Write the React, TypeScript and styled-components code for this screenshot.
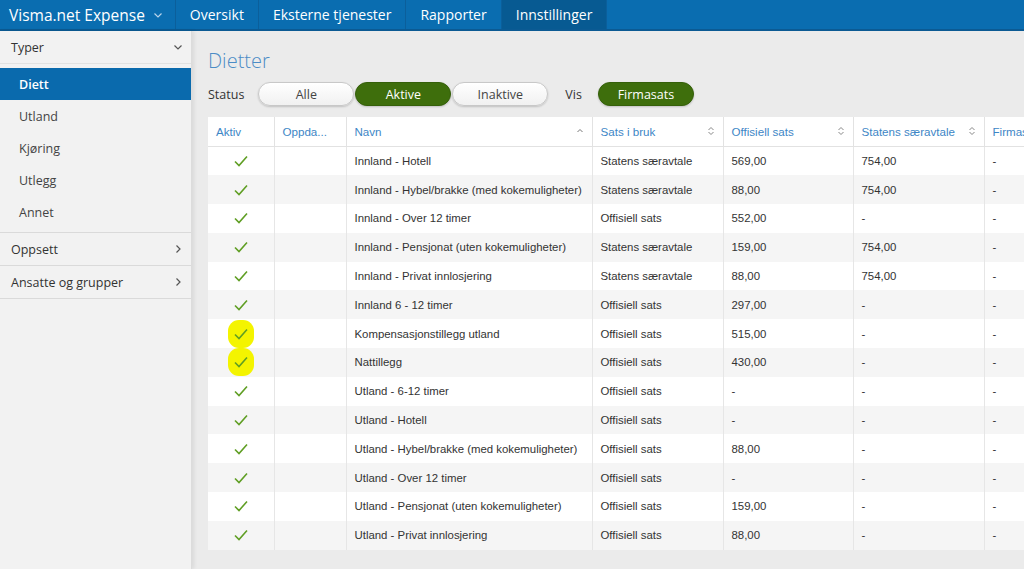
import React from "react";
import styled, { createGlobalStyle } from "styled-components";

const GlobalStyle = createGlobalStyle`
  html, body { margin: 0; padding: 0; height: 100%; overflow: hidden; }
  body { font-family: "Open Sans", "Liberation Sans", Arial, sans-serif; background: #ebebeb; }
  #root { height: 100%; }
`;

const Page = styled.div`
  width: 1024px;
  height: 569px;
  display: flex;
  flex-direction: column;
  overflow: hidden;
`;

const TopBar = styled.div`
  height: 29px;
  flex-shrink: 0;
  display: flex;
  background: #0a6db0;
  border-bottom: 2px solid #0b5a93;
`;

const NavItem = styled.div<{ $active?: boolean; $brand?: boolean }>`
  display: flex;
  align-items: center;
  gap: 8px;
  padding: 0 ${(p) => (p.$brand ? "12px" : "14px")} 0 ${(p) => (p.$brand ? "9px" : "14px")};
  color: #fff;
  font-size: ${(p) => (p.$brand ? "15.5px" : "14px")};
  background: ${(p) => (p.$active ? "#075a92" : "transparent")};
  border-right: 1px solid #0b5f9b;
  white-space: nowrap;
`;

const Body = styled.div`
  flex: 1;
  display: flex;
  min-height: 0;
`;

const Sidebar = styled.div`
  width: 191px;
  flex-shrink: 0;
  background: #f2f2f2;
  border-right: 1px solid #dcdcdc;
  box-shadow: 2px 0 4px rgba(0, 0, 0, 0.08);
  z-index: 1;
`;

const Section = styled.div`
  border-bottom: 1px solid #dadada;
`;

const SectionHead = styled.div`
  height: 32px;
  display: flex;
  align-items: center;
  justify-content: space-between;
  padding: 0 8px 0 11px;
  font-size: 12.5px;
  color: #333;
`;

const SubList = styled.div`
  border-top: 1px solid #e2e2e2;
  padding: 4px 0 4px;
`;

const SubItem = styled.div<{ $active?: boolean }>`
  height: 32px;
  display: flex;
  align-items: center;
  padding-left: 19px;
  font-size: 12.5px;
  color: ${(p) => (p.$active ? "#fff" : "#444")};
  background: ${(p) => (p.$active ? "#0a6aad" : "transparent")};
  font-weight: ${(p) => (p.$active ? 600 : 400)};
`;

const Main = styled.div`
  flex: 1;
  min-width: 0;
  padding: 18px 0 0 16px;
  overflow: hidden;
`;

const Title = styled.h1`
  margin: 0 0 8px;
  font-weight: 300;
  font-size: 20px;
  color: #4b8cc6;
  line-height: 24px;
`;

const FilterRow = styled.div`
  display: flex;
  align-items: center;
  height: 26px;
  margin-bottom: 10px;
`;

const Label = styled.span<{ $ml?: number }>`
  font-size: 12.5px;
  color: #333;
  margin-left: ${(p) => p.$ml ?? 0}px;
  margin-right: ${(p) => (p.$ml ? 16 : 14)}px;
`;

const Pill = styled.div<{ $on?: boolean }>`
  width: 96px;
  height: 24px;
  box-sizing: border-box;
  margin-right: 1px;
  border-radius: 12px;
  display: flex;
  align-items: center;
  justify-content: center;
  font-size: 12.5px;
  color: ${(p) => (p.$on ? "#fff" : "#444")};
  background: ${(p) => (p.$on ? "#3e6e0c" : "linear-gradient(#fff, #f1f1f1)")};
  border: 1px solid ${(p) => (p.$on ? "#35600a" : "#c8c8c8")};
  box-shadow: 0 1px 2px rgba(0, 0, 0, 0.18);
`;

const Table = styled.table`
  border-collapse: collapse;
  table-layout: fixed;
  width: 900px;
  background: #fff;
  font-family: "Liberation Sans", Arial, sans-serif;
  font-size: 11.4px;
`;

const Th = styled.th<{ $w: number }>`
  box-sizing: border-box;
  width: ${(p) => p.$w}px;
  height: 29px;
  padding: 0 8px;
  text-align: left;
  font-weight: 400;
  font-size: 11.6px;
  color: #3d86c6;
  border-left: 1px solid #e2e2e2;
  border-bottom: 1px solid #e2e2e2;
  white-space: nowrap;
  overflow: hidden;
  &:first-child { border-left: none; }
`;

const ThInner = styled.div`
  display: flex;
  align-items: center;
  justify-content: space-between;
`;

const Row = styled.tr<{ $alt?: boolean }>`
  background: ${(p) => (p.$alt ? "#f5f5f5" : "#fff")};
`;

const Td = styled.td<{ $center?: boolean }>`
  height: 28.8px;
  padding: 0 8px;
  color: #333;
  border-left: 1px solid #e6e6e6;
  white-space: nowrap;
  overflow: hidden;
  text-align: ${(p) => (p.$center ? "center" : "left")};
  &:first-child { border-left: none; }
`;

const Mark = styled.span<{ $hl?: boolean }>`
  display: inline-flex;
  align-items: center;
  justify-content: center;
  width: 26px;
  height: 28px;
  border-radius: 11px;
  background: ${(p) => (p.$hl ? "#f4f400" : "transparent")};
  vertical-align: middle;
`;

const Chevron = ({ dir, color }: { dir: "down" | "right"; color: string }) => (
  <svg width="10" height="10" viewBox="0 0 10 10">
    {dir === "down" ? (
      <path d="M1.5 3.5 L5 7 L8.5 3.5" fill="none" stroke={color} strokeWidth="1.2" />
    ) : (
      <path d="M3.5 1.5 L7 5 L3.5 8.5" fill="none" stroke={color} strokeWidth="1.2" />
    )}
  </svg>
);

const SortBoth = () => (
  <svg width="8" height="10" viewBox="0 0 8 10">
    <path d="M1.5 4 L4 1.5 L6.5 4 M1.5 6 L4 8.5 L6.5 6" fill="none" stroke="#888" strokeWidth="1" />
  </svg>
);

const SortUp = () => (
  <svg width="8" height="8" viewBox="0 0 8 8">
    <path d="M1.5 5 L4 2.5 L6.5 5" fill="none" stroke="#777" strokeWidth="1" />
  </svg>
);

const Check = () => (
  <svg width="14" height="12" viewBox="0 0 14 12">
    <path d="M1 6.5 L5 10.5 L13 1.5" fill="none" stroke="#5f9e23" strokeWidth="1.6" />
  </svg>
);

const rows: [string, string, string, string][] = [
  ["Innland - Hotell", "Statens særavtale", "569,00", "754,00"],
  ["Innland - Hybel/brakke (med kokemuligheter)", "Statens særavtale", "88,00", "754,00"],
  ["Innland - Over 12 timer", "Offisiell sats", "552,00", "-"],
  ["Innland - Pensjonat (uten kokemuligheter)", "Statens særavtale", "159,00", "754,00"],
  ["Innland - Privat innlosjering", "Statens særavtale", "88,00", "754,00"],
  ["Innland 6 - 12 timer", "Offisiell sats", "297,00", "-"],
  ["Kompensasjonstillegg utland", "Offisiell sats", "515,00", "-"],
  ["Nattillegg", "Offisiell sats", "430,00", "-"],
  ["Utland - 6-12 timer", "Offisiell sats", "-", "-"],
  ["Utland - Hotell", "Offisiell sats", "-", "-"],
  ["Utland - Hybel/brakke (med kokemuligheter)", "Offisiell sats", "88,00", "-"],
  ["Utland - Over 12 timer", "Offisiell sats", "-", "-"],
  ["Utland - Pensjonat (uten kokemuligheter)", "Offisiell sats", "159,00", "-"],
  ["Utland - Privat innlosjering", "Offisiell sats", "88,00", "-"],
];

export default function App() {
  return (
    <Page>
      <GlobalStyle />
      <TopBar>
        <NavItem $brand>
          Visma.net Expense <Chevron dir="down" color="#b9d4ea" />
        </NavItem>
        <NavItem>Oversikt</NavItem>
        <NavItem>Eksterne tjenester</NavItem>
        <NavItem>Rapporter</NavItem>
        <NavItem $active>Innstillinger</NavItem>
      </TopBar>
      <Body>
        <Sidebar>
          <Section>
            <SectionHead>
              Typer <Chevron dir="down" color="#555" />
            </SectionHead>
            <SubList>
              <SubItem $active>Diett</SubItem>
              <SubItem>Utland</SubItem>
              <SubItem>Kjøring</SubItem>
              <SubItem>Utlegg</SubItem>
              <SubItem>Annet</SubItem>
            </SubList>
          </Section>
          <Section>
            <SectionHead>
              Oppsett <Chevron dir="right" color="#555" />
            </SectionHead>
          </Section>
          <Section>
            <SectionHead>
              Ansatte og grupper <Chevron dir="right" color="#555" />
            </SectionHead>
          </Section>
        </Sidebar>
        <Main>
          <Title>Dietter</Title>
          <FilterRow>
            <Label>Status</Label>
            <Pill>Alle</Pill>
            <Pill $on>Aktive</Pill>
            <Pill>Inaktive</Pill>
            <Label $ml={16}>Vis</Label>
            <Pill $on>Firmasats</Pill>
          </FilterRow>
          <Table>
            <thead>
              <tr>
                <Th $w={66}>Aktiv</Th>
                <Th $w={72}>Oppda...</Th>
                <Th $w={246}>
                  <ThInner>
                    Navn <SortUp />
                  </ThInner>
                </Th>
                <Th $w={131}>
                  <ThInner>
                    Sats i bruk <SortBoth />
                  </ThInner>
                </Th>
                <Th $w={130}>
                  <ThInner>
                    Offisiell sats <SortBoth />
                  </ThInner>
                </Th>
                <Th $w={131}>
                  <ThInner>
                    Statens særavtale <SortBoth />
                  </ThInner>
                </Th>
                <Th $w={124}>Firmasats</Th>
              </tr>
            </thead>
            <tbody>
              {rows.map((r, i) => (
                <Row key={r[0]} $alt={i % 2 === 1}>
                  <Td $center>
                    <Mark $hl={i === 6 || i === 7}>
                      <Check />
                    </Mark>
                  </Td>
                  <Td />
                  <Td>{r[0]}</Td>
                  <Td>{r[1]}</Td>
                  <Td>{r[2]}</Td>
                  <Td>{r[3]}</Td>
                  <Td>-</Td>
                </Row>
              ))}
            </tbody>
          </Table>
        </Main>
      </Body>
    </Page>
  );
}
